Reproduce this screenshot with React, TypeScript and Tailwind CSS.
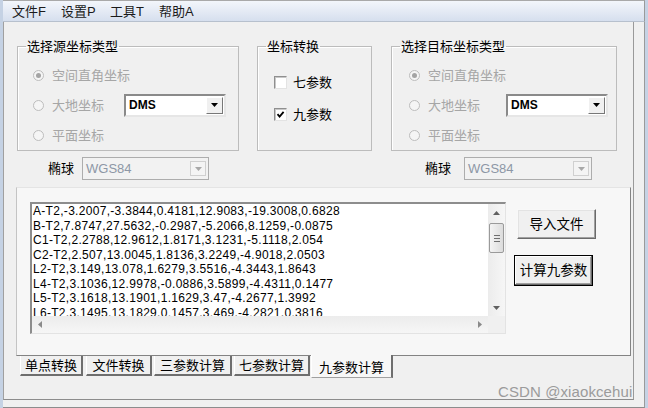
import React from 'react'

const LINES = [
  'A-T2,-3.2007,-3.3844,0.4181,12.9083,-19.3008,0.6828',
  'B-T2,7.8747,27.5632,-0.2987,-5.2066,8.1259,-0.0875',
  'C1-T2,2.2788,12.9612,1.8171,3.1231,-5.1118,2.054',
  'C2-T2,2.507,13.0045,1.8136,3.2249,-4.9018,2.0503',
  'L2-T2,3.149,13.078,1.6279,3.5516,-4.3443,1.8643',
  'L4-T2,3.1036,12.9978,-0.0886,3.5899,-4.4311,0.1477',
  'L5-T2,3.1618,13.1901,1.1629,3.47,-4.2677,1.3992',
  'L6-T2,3.1495,13.1829,0.1457,3.469,-4.2821,0.3816',
]

const TABS = [
  { label: '单点转换', w: 'w-[63px]', ml: 'ml-[4px]' },
  { label: '文件转换', w: 'w-[66px]', ml: 'ml-[3px]' },
  { label: '三参数计算', w: 'w-[78px]', ml: 'ml-[2px]' },
  { label: '七参数计算', w: 'w-[76px]', ml: 'ml-[2px]' },
]

function Radio({ checked, label }: { checked?: boolean; label: string }) {
  return (
    <div className="flex items-center h-[30px]">
      <span className="w-[11px] h-[11px] rounded-full border border-[#bdbdbd] bg-[#f5f5f5] flex items-center justify-center">
        {checked && <span className="w-[5px] h-[5px] rounded-full bg-[#a4a4a4]" />}
      </span>
      <span className="ml-[8px] text-[#a6a6a6]">{label}</span>
    </div>
  )
}

function Arrow({ color = '#000' }: { color?: string }) {
  return (
    <svg width="7" height="4" viewBox="0 0 7 4">
      <path d="M0 0h7L3.5 4z" fill={color} />
    </svg>
  )
}

function DmsCombo() {
  return (
    <div className="w-[102px] h-[23px] bg-white border-2 border-t-[#8a8a8a] border-l-[#8a8a8a] border-r-[#e6e6e6] border-b-[#e6e6e6] flex items-center">
      <span className="flex-1 pl-[3px] text-[12px] font-bold text-black">DMS</span>
      <span className="w-[17px] h-[17px] mr-px bg-[#f0f0f0] border border-t-white border-l-white border-r-[#777] border-b-[#777] flex items-center justify-center">
        <Arrow />
      </span>
    </div>
  )
}

function EllipsoidCombo({ w }: { w: string }) {
  return (
    <div className={`${w} h-[23px] bg-[#f2f2f2] border border-[#adadad] flex items-center`}>
      <span className="flex-1 pl-[3px] text-[13px] text-[#8d97a6]">WGS84</span>
      <span className="w-[16px] h-[15px] mr-[2px] border border-[#d0d0d0] bg-[#f4f4f4] flex items-center justify-center">
        <Arrow color="#a8a8a8" />
      </span>
    </div>
  )
}

function Check({ checked, label }: { checked?: boolean; label: string }) {
  return (
    <div className="flex items-center h-[32px]">
      <span className="w-[13px] h-[13px] bg-white border border-t-[#8f8f8f] border-l-[#8f8f8f] border-r-[#e3e3e3] border-b-[#e3e3e3] shadow-[inset_1px_1px_0_#c8c8c8] flex items-center justify-center">
        {checked && (
          <svg width="9" height="9" viewBox="0 0 9 9">
            <path d="M1.5 4.2 3.6 6.6 7.6 1.8" fill="none" stroke="#000" strokeWidth="1.8" />
          </svg>
        )}
      </span>
      <span className="ml-[6px] text-black">{label}</span>
    </div>
  )
}

function Group({ title, w, children }: { title: string; w: string; children: React.ReactNode }) {
  return (
    <fieldset className={`${w} h-[112px] border border-[#bcbcbc] shadow-[inset_1px_1px_0_#fff]`}>
      <legend className="ml-[8px] px-[1px] leading-[15px] text-black">{title}</legend>
      {children}
    </fieldset>
  )
}

export default function App() {
  return (
    <div className="relative w-[648px] h-[408px] overflow-hidden bg-[#f0f0f0] border-l-[3px] border-l-[#c5d2e4] border-r-[3px] border-r-[#c5d2e4] text-[13px] leading-[15px] font-['Liberation_Sans','Noto_Sans_CJK_SC',sans-serif] flex flex-col">
      {/* menu */}
      <div className="h-[22px] flex items-center border-t border-t-[#a9a9a9] border-b border-b-[#b7c0cd] border-r border-r-[#9a9a9a] bg-gradient-to-b from-[#f3f6fb] to-[#d6dfee] pl-[9px] text-[#1a1a1a]">
        {['文件F', '设置P', '工具T', '帮助A'].map(m => (
          <span key={m} className="w-[49px]">{m}</span>
        ))}
      </div>

      <div className="flex-1 flex flex-col border-r border-r-[#9a9a9a] border-b border-b-[#8c8c8c] pb-[2px]">
        <div className="w-[631px] flex-1 flex flex-col border-l border-l-[#a0a0a0] border-r border-r-[#9a9a9a] border-b border-b-[#8c8c8c] mb-[5px]">
          {/* group boxes */}
          <div className="flex mt-[17px] ml-[13px]">
            <Group title="选择源坐标类型" w="w-[222px]">
              <div className="pt-[6px] pl-[15px]">
                <Radio checked label="空间直角坐标" />
                <div className="flex items-center">
                  <div className="w-[91px]"><Radio label="大地坐标" /></div>
                  <DmsCombo />
                </div>
                <Radio label="平面坐标" />
              </div>
            </Group>
            <div className="ml-[18px]">
              <Group title="坐标转换" w="w-[115px]">
                <div className="pt-[12px] pl-[16px]">
                  <Check label="七参数" />
                  <Check checked label="九参数" />
                </div>
              </Group>
            </div>
            <div className="ml-[19px]">
              <Group title="选择目标坐标类型" w="w-[226px]">
                <div className="pt-[6px] pl-[17px]">
                  <Radio checked label="空间直角坐标" />
                  <div className="flex items-center">
                    <div className="w-[97px]"><Radio label="大地坐标" /></div>
                    <DmsCombo />
                  </div>
                  <Radio label="平面坐标" />
                </div>
              </Group>
            </div>
          </div>

          {/* ellipsoid row */}
          <div className="flex items-center mt-[6px] ml-[44px] h-[23px]">
            <span className="w-[34px] text-black">椭球</span>
            <EllipsoidCombo w="w-[127px]" />
            <span className="ml-[216px] w-[39px] text-black">椭球</span>
            <EllipsoidCombo w="w-[128px]" />
          </div>

          {/* tab page */}
          <div className="ml-[12px] mt-[7px] w-[615px] h-[169px] bg-[#f7f7f7] border border-t-[#e4e4e4] border-l-[#c4c4c4] border-r-[#838383] border-b-[#838383] flex">
            <div className="ml-[13px] mt-[14px] w-[476px] h-[132px] bg-white border-t-2 border-l-2 border-t-[#8d8d8d] border-l-[#8d8d8d] border-r border-b border-r-[#e3e3e3] border-b-[#e3e3e3] flex flex-col">
              <div className="flex h-[112px]">
                <div className="flex-1 overflow-hidden pl-[1px] text-[12px] leading-[14.5px] tracking-[0.3px] text-black font-['Liberation_Sans',sans-serif] whitespace-nowrap">
                  {LINES.map(l => <div key={l}>{l}</div>)}
                </div>
                <div className="w-[17px] bg-gradient-to-r from-[#ececec] to-[#f6f6f6] flex flex-col items-center">
                  <div className="h-[17px] flex items-center justify-center">
                    <svg width="7" height="4" viewBox="0 0 7 4"><path d="M0 4h7L3.5 0z" fill="#606060" /></svg>
                  </div>
                  <div className="mt-[2px] w-[15px] h-[30px] rounded-[2px] border border-[#9a9a9a] bg-gradient-to-r from-[#f4f4f4] to-[#dcdcdc] flex flex-col items-center justify-center gap-[2px]">
                    <span className="w-[6px] h-px bg-[#6f6f6f]" />
                    <span className="w-[6px] h-px bg-[#6f6f6f]" />
                    <span className="w-[6px] h-px bg-[#6f6f6f]" />
                  </div>
                  <div className="flex-1" />
                  <div className="h-[17px] flex items-center justify-center">
                    <Arrow color="#606060" />
                  </div>
                </div>
              </div>
              <div className="flex h-[17px]">
                <div className="flex-1 bg-gradient-to-b from-[#ececec] to-[#f6f6f6] flex items-center justify-between px-[6px]">
                  <svg width="4" height="7" viewBox="0 0 4 7"><path d="M4 0v7L0 3.5z" fill="#8a8a8a" /></svg>
                  <svg width="4" height="7" viewBox="0 0 4 7"><path d="M0 0v7l4-3.5z" fill="#8a8a8a" /></svg>
                </div>
                <div className="w-[17px] bg-[#f0f0f0]" />
              </div>
            </div>

            <div className="flex flex-col">
              <button className="ml-[11px] mt-[21px] w-[79px] h-[30px] bg-[#f0f0f0] border border-t-[#f8f8f8] border-l-[#f8f8f8] border-r-[#6a6a6a] border-b-[#6a6a6a] shadow-[inset_-1px_-1px_0_#a0a0a0,inset_1px_1px_0_#e3e3e3] text-[13.5px] text-black">
                导入文件
              </button>
              <button className="ml-[8px] mt-[16px] w-[79px] h-[31px] bg-[#f0f0f0] border border-black shadow-[inset_-1px_-1px_0_#6a6a6a,inset_1px_1px_0_#fff,inset_-2px_-2px_0_#a0a0a0] text-[13.5px] text-black">
                计算九参数
              </button>
            </div>
          </div>

          {/* tabs */}
          <div className="flex items-start ml-[12px]">
            {TABS.map(t => (
              <div
                key={t.label}
                className={`${t.ml} ${t.w} h-[20px] bg-[#f0f0f0] border-l border-l-white border-r-2 border-r-[#6e6e6e] border-b-2 border-b-[#6e6e6e] flex items-center justify-center text-black`}
              >
                {t.label}
              </div>
            ))}
            <div className="ml-[1px] -mt-px w-[82px] h-[23px] bg-[#f7f7f7] border-l border-l-white border-r-2 border-r-[#6e6e6e] border-b border-b-[#a0a0a0] flex items-center justify-center pt-[2px] text-black">
              九参数计算
            </div>
          </div>
        </div>
      </div>

      <span className="absolute left-[495px] top-[383px] text-[15px] leading-[17px] tracking-[0.1px] text-[#9b9b9b] font-['Liberation_Sans',sans-serif]">
        CSDN @xiaokcehui
      </span>
    </div>
  )
}
